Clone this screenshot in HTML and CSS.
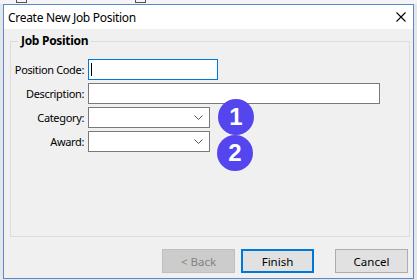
FILE: index.html
```html
<!DOCTYPE html>
<html lang="en">
<head>
    <meta charset="UTF-8">
    <title>Create New Job Position</title>
    <link rel="stylesheet" href="styles.css">
</head>
<body>
    <div class="backdrop">
        <span class="peek peek-a"></span>
        <span class="peek peek-b"></span>
    </div>
    <div class="window">
        <div class="titlebar">
            <span class="title">Create New Job Position</span>
            <svg class="close" width="10" height="10" viewBox="0 0 10 10">
                <path d="M0.5 0.5 L9.5 9.5 M9.5 0.5 L0.5 9.5" stroke="#000" stroke-width="1.1" fill="none"/>
            </svg>
        </div>

        <fieldset class="group">
            <legend>Job Position</legend>
            <div class="form-grid">
                <label>Position Code:</label>
                <div class="field field-focus w-code"><span class="caret"></span></div>

                <label>Description:</label>
                <div class="field w-desc"></div>

                <label>Category:</label>
                <div class="field combo">
                    <svg width="9" height="5" viewBox="0 0 9 5"><path d="M0.5 0.5 L4.5 4.5 L8.5 0.5" stroke="#555" fill="none"/></svg>
                </div>

                <label>Award:</label>
                <div class="field combo">
                    <svg width="9" height="5" viewBox="0 0 9 5"><path d="M0.5 0.5 L4.5 4.5 L8.5 0.5" stroke="#555" fill="none"/></svg>
                </div>
            </div>
        </fieldset>

        <div class="footer">
            <button class="btn btn-disabled">&lt; Back</button>
            <button class="btn btn-default">Finish</button>
            <button class="btn btn-cancel">Cancel</button>
        </div>

        <!-- step markers -->
        <span class="badge badge-1">1</span>
        <span class="badge badge-2">2</span>
    </div>
</body>
</html>
```

FILE: styles.css
```css
body {
    margin: 0;
    background-color: #e6e6e6;
    font-family: "Noto Sans", "Open Sans", sans-serif;
    font-size: 11px;
    color: #000;
    width: 417px;
    height: 280px;
    overflow: hidden;
}

.backdrop {
    height: 4px;
    background-color: #f4f4f4;
    position: relative;
}

.peek {
    position: absolute;
    top: 0;
    width: 9px;
    height: 2px;
    border: 1px solid #555;
    border-top: none;
}

.peek-a { left: 16px; }
.peek-b { left: 135px; }

.window {
    position: relative;
    box-sizing: border-box;
    width: 411px;
    height: 275px;
    margin-left: 3px;
    border: 1px solid #5b87d2;
    background-color: #f0f0f0;
    display: flex;
    flex-direction: column;
}

.titlebar {
    height: 24px;
    background-color: #fff;
    display: flex;
    align-items: center;
    justify-content: space-between;
    padding: 0 7px 0 4px;
}

.title {
    font-size: 12px;
    letter-spacing: -0.3px;
}

.close {
    display: block;
}

.group {
    flex: 1;
    margin: 4px 3px 0 6px;
    padding: 10px 0 0 0;
    border: 1px solid #dcdcdc;
    min-width: 0;
}

.group legend {
    margin-left: 7px;
    padding: 0 3px;
    font-weight: bold;
    font-size: 12px;
    line-height: 16px;
    letter-spacing: -0.3px;
}

.form-grid {
    display: grid;
    grid-template-columns: 73px auto;
    column-gap: 4px;
    row-gap: 3px;
    align-items: center;
    justify-items: start;
}

.form-grid label {
    justify-self: end;
    line-height: 21px;
    white-space: nowrap;
    letter-spacing: -0.35px;
}

.field {
    box-sizing: border-box;
    height: 21px;
    background-color: #fff;
    border: 1px solid #7a7a7a;
    position: relative;
}

.field-focus {
    border-color: #0078d7;
}

.w-code { width: 130px; }
.w-desc { width: 292px; }

.caret {
    position: absolute;
    left: 2px;
    top: 3px;
    width: 1px;
    height: 13px;
    background-color: #000;
}

.combo {
    width: 122px;
    display: flex;
    align-items: center;
    justify-content: flex-end;
    padding-right: 6px;
}

.combo svg {
    display: block;
}

.footer {
    height: 41px;
    display: flex;
    align-items: flex-start;
    padding: 12px 5px 0 0;
    justify-content: flex-end;
    box-sizing: border-box;
}

.btn {
    box-sizing: border-box;
    width: 73px;
    height: 24px;
    font-family: inherit;
    font-size: 11.5px;
    background-color: #e1e1e1;
    border: 1px solid #adadad;
    color: #000;
    padding: 0;
}

.btn-disabled {
    background-color: #cccccc;
    border-color: #bfbfbf;
    color: #838383;
}

.btn-default {
    margin-left: 6px;
    border: 2px solid #0078d7;
}

.btn-cancel {
    margin-left: 21px;
}

.badge {
    position: absolute;
    width: 36px;
    height: 36px;
    border-radius: 50%;
    background-color: #5545ee;
    color: #fff;
    font-family: "Liberation Sans", Arial, sans-serif;
    font-weight: bold;
    font-size: 24px;
    display: flex;
    align-items: center;
    justify-content: center;
}

.badge-1 { left: 214px; top: 94px; }
.badge-2 { left: 213px; top: 130px; }
```
